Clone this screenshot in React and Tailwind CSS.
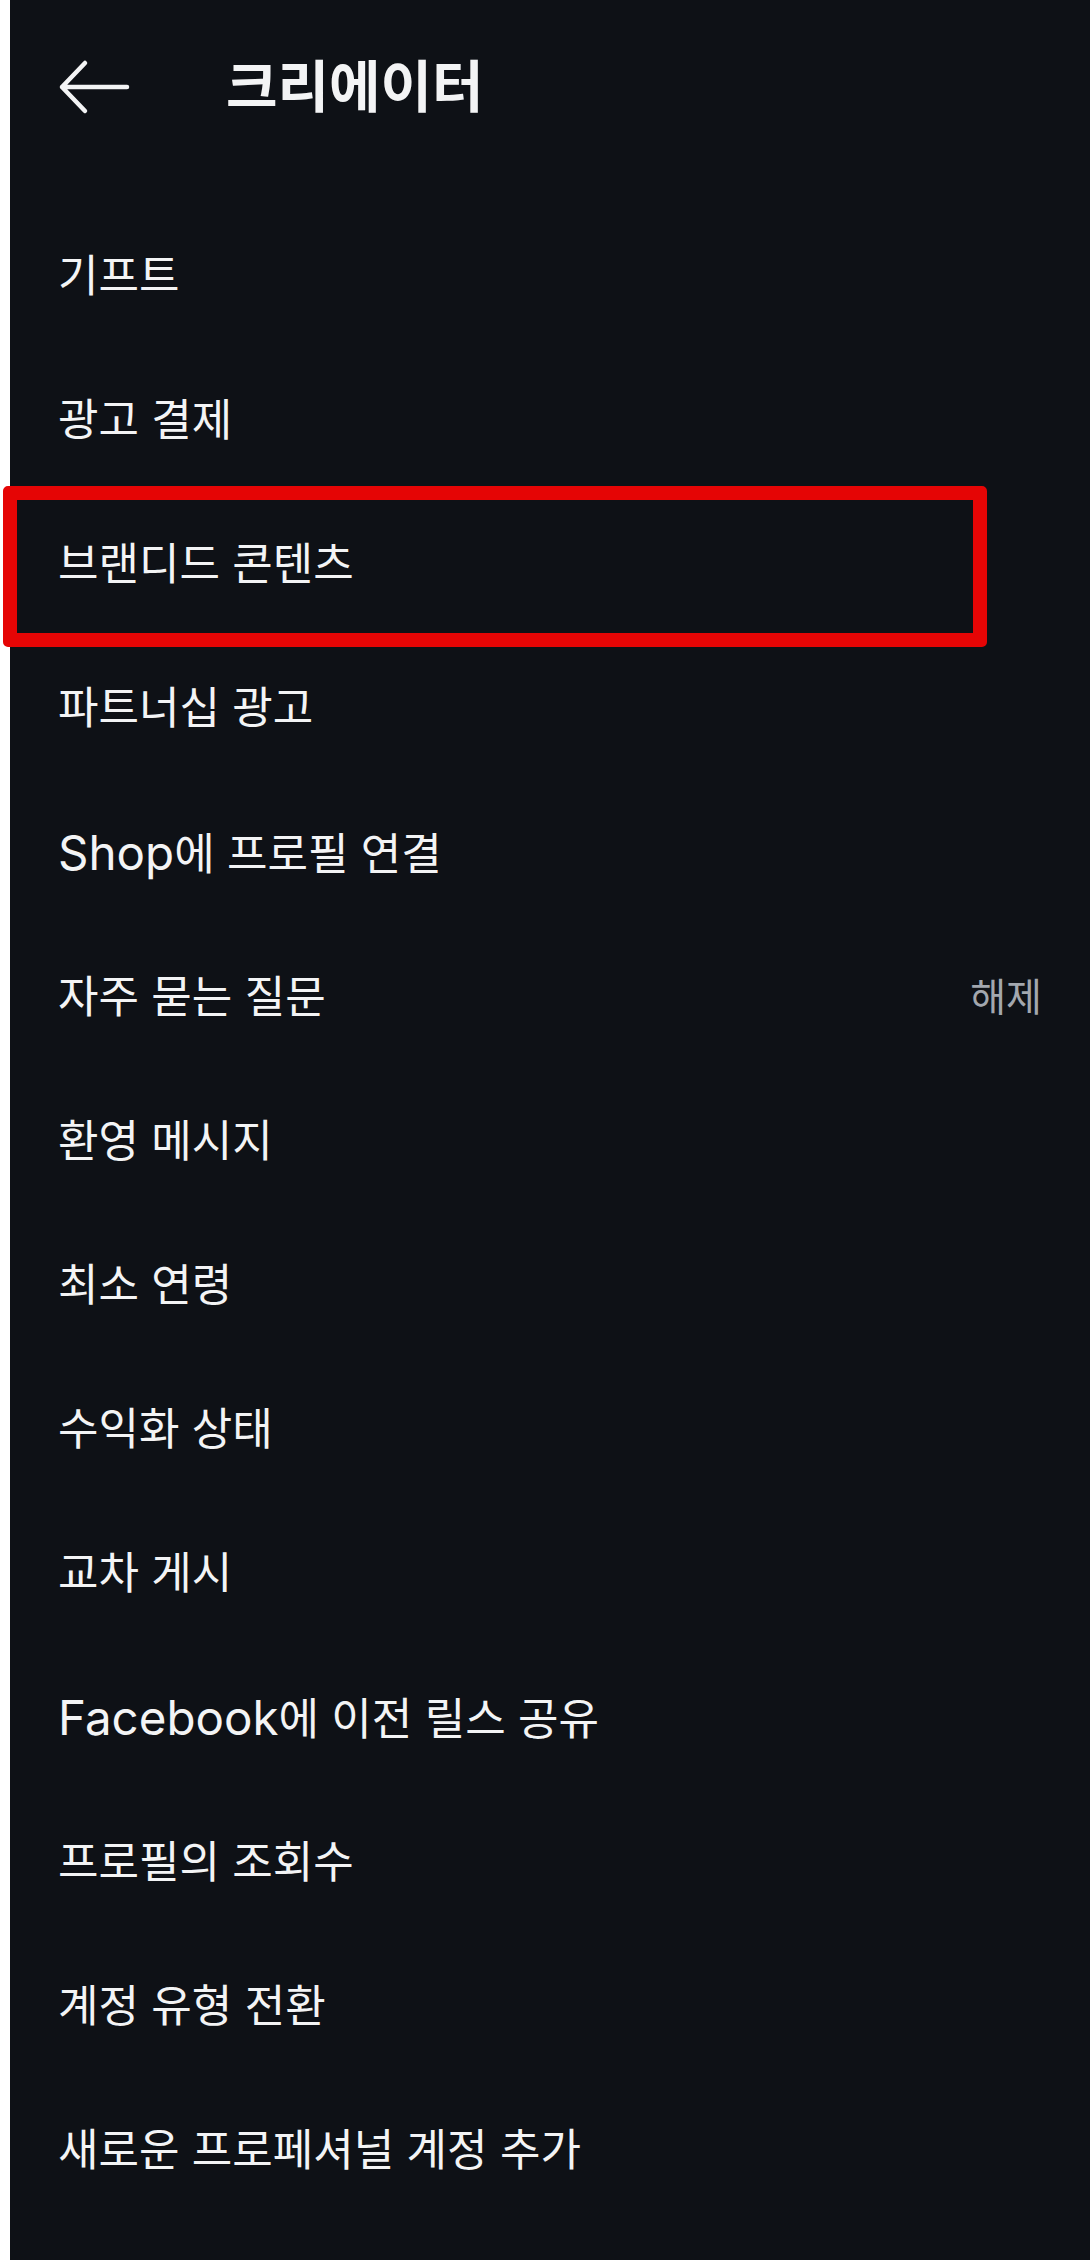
import React from "react";

const items = [
  ["기프트"],
  ["광고 결제"],
  ["브랜디드 콘텐츠"],
  ["파트너십 광고"],
  ["Shop", "에 프로필 연결"],
  ["자주 묻는 질문"],
  ["환영 메시지"],
  ["최소 연령"],
  ["수익화 상태"],
  ["교차 게시"],
  ["Facebook", "에 이전 릴스 공유"],
  ["프로필의 조회수"],
  ["계정 유형 전환"],
  ["새로운 프로페셔널 계정 추가"],
];

export default function App() {
  return (
    <div className="relative w-[1090px] h-[2260px] bg-white pl-[10px] font-[Inter,'Noto_Sans_CJK_KR',sans-serif]">
      <div className="h-full bg-[#0e1116] text-[#f3f4f5]">
        <header className="h-[174px] flex items-center">
          <button className="ml-[48px] w-[72px] h-[60px] flex items-center justify-center">
            <svg width="72" height="56" viewBox="0 0 72 56" fill="none">
              <path
                d="M69 28H4M27 4L4 28L27 52"
                stroke="#f3f4f5"
                strokeWidth="4.5"
                strokeLinecap="round"
                strokeLinejoin="round"
              />
            </svg>
          </button>
          <h1 className="ml-[96px] text-[56px] font-bold leading-none">크리에이터</h1>
        </header>
        <ul className="pt-[30px]">
          {items.map((parts) => {
            const key = parts.join("");
            return (
              <li key={key} className="h-[144.15px] flex items-center justify-between pl-[48px] pr-[48px]">
                <span className="text-[44px] leading-none">
                  {parts.length === 2 ? (
                    <>
                      <span className="text-[47.5px]">{parts[0]}</span>
                      {parts[1]}
                    </>
                  ) : (
                    parts[0]
                  )}
                </span>
                {key === "자주 묻는 질문" && (
                  <span className="text-[39px] leading-none text-[#a2a7ae]">해제</span>
                )}
              </li>
            );
          })}
        </ul>
      </div>
      <div className="absolute left-[3px] top-[486px] w-[984px] h-[161px] border-[14px] border-[#e50505] rounded-[5px]" />
    </div>
  );
}
